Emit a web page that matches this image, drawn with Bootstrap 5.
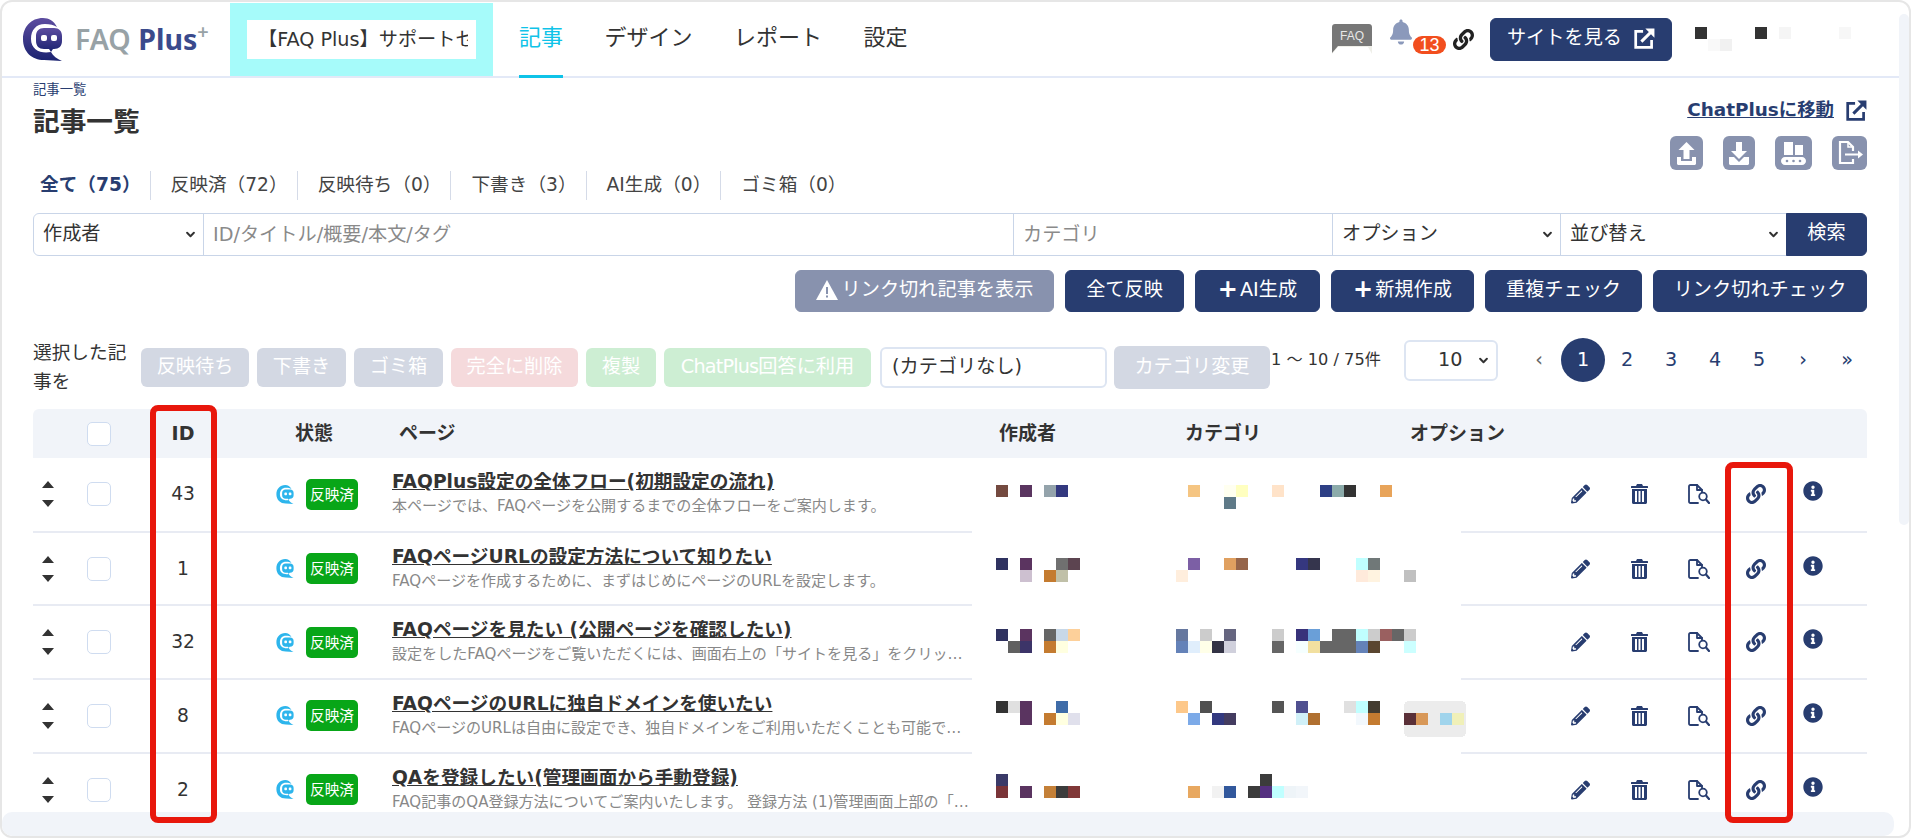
<!DOCTYPE html>
<html lang="ja">
<head>
<meta charset="UTF-8">
<title>記事一覧</title>
<link rel="stylesheet" href="https://cdn.jsdelivr.net/npm/bootstrap@5.3.3/dist/css/bootstrap.min.css">
<style>
  html, body { height: 100%; overflow: hidden; }
  body { font-family: "DejaVu Sans", "Noto Sans CJK JP", sans-serif; font-size: 19.2px; color: #333; background: #fff; }
  .fq-frame { position: relative; height: 100vh; border: 2px solid #e6e6e6; border-radius: 12px; overflow: hidden; }
  .fq-head { height: 76px; flex: none; border-bottom: 2px solid #e3e9f7; padding-right: 49px; }
  .fq-logo { width: 228px; flex: none; padding-left: 21px; gap: 13px; }
  .fq-logotext { font-family: "Noto Sans", sans-serif; font-size: 28.5px; font-weight: 600; color: #98a2a6; line-height: 1; white-space: nowrap; }
  .fq-logotext b { color: #3a4a8c; font-weight: 700; }
  .fq-logotext sup { font-size: 20px; top: -.55em; color: #98a2a6; }
  .fq-site { width: 263px; height: 73px; margin-top: 1px; flex: none; background: #a6fbfa; padding: 17px; }
  .fq-sitebox { height: 39px; background: #fff; padding: 0 8px 0 11px; }
  .fq-sitename { line-height: 39px; font-size: 19.2px; white-space: nowrap; overflow: hidden; }
  .fq-nav { margin-left: 26px; gap: 41.5px; height: 74px; }
  .fq-nav .nav-link { padding: 0; height: 76px; line-height: 72px; font-size: 22px; color: #333; }
  .fq-nav .nav-link.active { color: #0fc3e8; border-bottom: 3px solid #0fc3e8; }
  .fq-faq { width: 40px; height: 30px; }
  .fq-bellbox { position: relative; width: 56px; height: 40px; margin-left: 18px; }
  .fq-bellbox svg { width: 22px; height: 26px; color: #8b99bb; display: block; }
  .fq-count { position: absolute; left: 23px; top: 17px; width: 33px; height: 18px; border-radius: 9px; background: #f24e1e; color: #fff; font-size: 18px; line-height: 18px; text-align: center; font-family: "Liberation Sans", sans-serif; }
  .fq-chain { width: 21px; height: 21px; color: #222; margin-left: 7px; }
  .fq-viewsite { width: 182px; height: 43px; margin-left: 16px; gap: 12px; padding-bottom: 0; }
  .fq-user { width: 165px; height: 24px; margin-left: 23px; }
  .btn-fq { --bs-btn-bg: #283d70; --bs-btn-border-color: #283d70; --bs-btn-color: #fff; --bs-btn-hover-bg: #283d70; --bs-btn-hover-color: #fff; --bs-btn-hover-border-color: #283d70; --bs-btn-border-radius: 6px; font-size: 19.2px; padding: 0 0 2px; }
  .btn-fqmute { --bs-btn-bg: #8892ae; --bs-btn-border-color: #8892ae; --bs-btn-color: #fff; --bs-btn-hover-bg: #8892ae; --bs-btn-hover-color: #fff; --bs-btn-hover-border-color: #8892ae; --bs-btn-border-radius: 6px; font-size: 19.2px; padding: 0 0 2px; }
  .fq-plus { font-size: 24px; line-height: 1; margin-right: 2px; vertical-align: -1px; }
  .fq-main { flex: 1 1 auto; min-height: 0; overflow: hidden; padding: 0 42px 0 31px; }
  .fq-top { height: 92px; }
  .fq-crumb { font-size: 13.33px; line-height: 20px; padding-top: 2px; color: #283d70; }
  .fq-title { font-size: 26.67px; line-height: 36px; font-weight: 700; margin: 4px 0 0; color: #333; }
  .fq-jump { margin-top: 20px; font-size: 18.4px; line-height: 24px; font-weight: 700; color: #283d70; gap: 12px; }
  .fq-jump a { color: #283d70; }
  .fq-jump svg { width: 21px; height: 21px; }
  .fq-tools { margin-top: 14px; gap: 20px; }
  .fq-tool { height: 34px; border-radius: 6px; background: #8892ae; color: #fff; }
  .fq-tool svg { width: 100%; height: 100%; display: block; }
  .fq-tabs { margin-top: 1px; height: 29px; }
  .fq-tabs .nav-link { padding: 0 9px 2px 20px; line-height: 27px; color: #444; border-right: 1px solid #d5dbe8; font-size: 18.67px; }
  .fq-tabs li:first-child .nav-link { padding-left: 7px; font-weight: 700; color: #283d70; }
  .fq-tabs li:last-child .nav-link { border-right: 0; }
  .fq-search { margin-top: 13px; height: 43px; }
  .fq-search .form-control, .fq-search .form-select { border-color: #c9d5e8; border-radius: 0; height: 43px; font-size: 19.2px; color: #333; padding: 0 9px 1px; flex: none; }
  .fq-search .form-control::placeholder { color: #8a8a8a; }
  .fq-search > :first-child { border-top-left-radius: 6px !important; border-bottom-left-radius: 6px !important; }
  .fq-search .btn { border-radius: 0 6px 6px 0 !important; width: 81px; margin-left: -1px; }
  .form-select { background-image: url("data:image/svg+xml,%3csvg xmlns='http://www.w3.org/2000/svg' viewBox='0 0 16 16'%3e%3cpath fill='none' stroke='%23333' stroke-linecap='round' stroke-linejoin='round' stroke-width='3.5' d='m2 5 6 6 6-6'/%3e%3c/svg%3e"); background-size: 9px 9px; background-position: right 8px center; }
  .fq-actions { margin-top: 14px; gap: 11px; }
  .fq-actions .btn { height: 42px; }
  .fq-bulk { margin-top: 26px; height: 59px; }
  .fq-bulklabel { width: 108px; flex: none; line-height: 29px; font-size: 18.67px; padding-right: 8px; margin-top: -2px; }
  .fq-bulkbtns { gap: 8px; }
  .btn-fqoff { height: 39px; padding: 0; font-size: 19.2px; color: #fff; border: 0; border-radius: 6px; white-space: nowrap; }
  .fq-tight { letter-spacing: -.8px; }
  .fq-offgray { background: #d3d8e3; }
  .fq-offred { background: #f5dadc; }
  .fq-offgreen { background: #cdeed3; }
  .fq-catselect { width: 227px; height: 41px; margin-left: 9px; margin-right: 7px; flex: none; border: 2px solid #dde5f2; border-radius: 6px; padding: 0 10px; font-size: 19.2px; line-height: 35px; color: #333; background: #fff; }
  .fq-catchange { width: 156px; height: 43px; flex: none; padding: 0; font-size: 19.2px; color: #fff; background: #d3d8e3; border: 0; border-radius: 6px; }
  .fq-range { width: 133px; flex: none; margin-left: 1px; font-size: 16.2px; line-height: 44px; height: 44px; align-self: flex-start; white-space: nowrap; }
  .fq-perpage { width: 94px; height: 41px; flex: none; margin-top: 2px; align-self: flex-start; border: 2px solid #dde5f2; border-radius: 6px; font-size: 19.2px; padding: 0 0 0 32px; color: #333; }
  .fq-pages { margin: 0 0 0 19px; align-self: flex-start; }
  .fq-pages .page-link { width: 44px; height: 44px; padding: 0; line-height: 44px; text-align: center; border: 0; background: transparent; color: #283d70; font-size: 19.2px; margin: 0 !important; }
  .fq-pages .page-item { margin: 0; }
  .fq-pages .page-item.active .page-link { background: #283d70; color: #fff; border-radius: 50%; }
  .fq-pages .fq-arrow { color: #666; }
  .fq-table { width: 1834px; table-layout: fixed; margin: 12px 0 0; border-collapse: collapse; }
  .fq-table th { height: 49px; background: #f1f4f9; font-size: 19px; font-weight: 700; padding: 0; color: #333; }
  .fq-table th:last-child { border-top-right-radius: 6px; }
  .fq-table th:first-child { border-top-left-radius: 6px; }
  .fq-table td { height: 73.7px; padding: 0; border-bottom: 2px solid #e8ebf3; vertical-align: middle; }
  .fq-table td.fq-blur { border-bottom: 0; vertical-align: top; background: #fff; }
  .fq-pad9 { padding-left: 9px !important; }
  .fq-check { width: 24px; height: 24px; margin: 0; display: block; border: 1.5px solid #cfdcf0; border-radius: 5px !important; }
  .fq-thstate { padding-left: 59px !important; }
  .fq-thpage { padding-left: 7px !important; }
  .fq-thauthor { padding-left: 27px !important; }
  .fq-thcat { padding-left: 20px !important; }
  .fq-thopt { padding-left: 20px !important; }
  .fq-sort { width: 12px; height: 26px; display: block; color: #333; }
  .fq-num { text-align: center; font-size: 18.67px; color: #333; }
  .fq-state { padding-left: 40px; gap: 12px; }
  .fq-state svg { width: 18px; height: 19px; color: #2db5ec; }
  .fq-stateflag { width: 52px; height: 31px; line-height: 31px; text-align: center; padding: 0; background: #08a618; color: #fff; font-size: 14.67px; font-weight: 400; border-radius: 5px; }
  .fq-page { width: 580px; }
  .fq-pagetitle { display: block; font-size: 18.67px; font-weight: 700; line-height: 25px; color: #333; text-decoration: underline; white-space: nowrap; }
  .fq-pagesub { font-size: 15.05px; line-height: 25px; color: #888; }
  .fq-pix { display: block; overflow: visible; }
  .fq-pix rect { width: 12px; height: 12px; }
  .fq-pix rect.fq-tag { width: 62px; height: 36px; }
  .fq-ops { padding-left: 11px; color: #283d70; height: 20px; }
  .fq-ops svg { display: block; height: 20px; flex: none; }
  .fq-i1 { width: 19px; }
  .fq-i2 { width: 17px; margin-left: 41px; }
  .fq-i3 { width: 22px; margin-left: 40px; }
  .fq-i4 { width: 20px; margin-left: 36px; }
  .fq-i5 { width: 20px; margin-left: 37px; margin-top: -6px; }
  .fq-hbar { flex: none; height: 24px; margin-right: 15px; background: #f1f4f9; border-radius: 10px; }
  .fq-vbar { position: absolute; right: 0; top: 12px; width: 10px; height: 511px; background: #f1f4f9; border-radius: 5px; }
  .fq-redbox { position: absolute; border: 6px solid #e8170c; border-radius: 8px; pointer-events: none; }
  .fq-redid { left: 148px; top: 403px; width: 67px; height: 418px; }
  .fq-redlink { left: 1723px; top: 460px; width: 68px; height: 361px; }
</style>
</head>
<body>
<svg width="0" height="0" class="position-absolute">
  <symbol id="i-bot" viewBox="0 0 39 43">
    <path fill="currentColor" d="M20 0C8 0 0 9 0 21c0 13 9 21 21 21 6 0 12 1 18 1-5-2-9-5-11-9-10 2-20-2-20-13C8 12 13 6 22 6c5 0 9 1 12 3-3-6-8-9-14-9z"/>
    <path fill="currentColor" d="M21 10h10c5 0 8 3 8 8v5c0 5-3 8-8 8h-1l-2 3-2-3h-5c-5 0-8-3-8-8v-5c0-5 3-8 8-8z"/>
    <rect x="18" y="17" width="6" height="6" rx="2" fill="#fff"/><rect x="28" y="17" width="6" height="6" rx="2" fill="#fff"/>
  </symbol>
  <symbol id="i-link" viewBox="0 0 512 512"><path fill="currentColor" d="M326.612 185.391c59.747 59.809 58.927 155.698.36 214.59-.11.12-.24.25-.36.37l-67.2 67.2c-59.27 59.27-155.699 59.262-214.96 0-59.27-59.26-59.27-155.7 0-214.96l37.106-37.106c9.84-9.84 26.786-3.3 27.294 10.606.648 17.722 3.826 35.527 9.69 52.721 1.986 5.822.567 12.262-3.783 16.612l-13.087 13.087c-28.026 28.026-28.905 73.66-1.155 101.96 28.024 28.579 74.086 28.749 102.325.51l67.2-67.19c28.191-28.191 28.073-73.757 0-101.83-3.701-3.694-7.429-6.564-10.341-8.569a16.037 16.037 0 0 1-6.947-12.606c-.396-10.567 3.348-21.456 11.698-29.806l21.054-21.055c5.521-5.521 14.182-6.199 20.584-1.731a152.482 152.482 0 0 1 20.522 17.197zM467.547 44.449c-59.261-59.262-155.69-59.27-214.96 0l-67.2 67.2c-.12.12-.25.25-.36.37-58.566 58.892-59.387 154.781.36 214.59a152.454 152.454 0 0 0 20.521 17.196c6.402 4.468 15.064 3.789 20.584-1.731l21.054-21.055c8.35-8.35 12.094-19.239 11.698-29.806a16.037 16.037 0 0 0-6.947-12.606c-2.912-2.005-6.64-4.875-10.341-8.569-28.073-28.073-28.191-73.639 0-101.83l67.2-67.19c28.239-28.239 74.3-28.069 102.325.51 27.75 28.3 26.872 73.934-1.155 101.96l-13.087 13.087c-4.35 4.35-5.769 10.79-3.783 16.612 5.864 17.194 9.042 34.999 9.69 52.721.509 13.906 17.454 20.446 27.294 10.606l37.106-37.106c59.271-59.259 59.271-155.699.001-214.959z"/></symbol>
  <symbol id="i-pen" viewBox="0 0 512 512"><path fill="currentColor" d="M497.9 142.1l-46.1 46.1c-4.7 4.7-12.3 4.7-17 0l-111-111c-4.7-4.7-4.7-12.3 0-17l46.1-46.1c18.7-18.7 49.1-18.7 67.9 0l60.1 60.1c18.8 18.7 18.8 49.1 0 67.9zM284.2 99.8L21.6 362.4.4 483.9c-2.9 16.4 11.4 30.6 27.8 27.8l121.5-21.3 262.6-262.6c4.7-4.7 4.7-12.3 0-17l-111-111c-4.8-4.7-12.4-4.7-17.1 0zM124.1 339.9c-5.5-5.5-5.5-14.3 0-19.8l154-154c5.5-5.5 14.3-5.5 19.8 0s5.5 14.3 0 19.8l-154 154c-5.5 5.5-14.3 5.500-19.8 0zM88 424h48v36.3l-64.5 11.3-31.1-31.1L51.7 376H88v48z"/></symbol>
  <symbol id="i-trash" viewBox="0 0 17 20"><path fill="currentColor" fill-rule="evenodd" d="M6 0h5l1 2h4.5c.3 0 .5.2.5.5V4H0V2.500c0-.3.2-.5.500-.5H5zM1 5h15v13.500c0 .8-.7 1.500-1.500 1.500h-12C1.700 20 1 19.300 1 18.500zm3 2v11h2V7zm3.500 0v11h2V7zM11 7v11h2V7z"/></symbol>
  <symbol id="i-docfind" viewBox="0 0 22 20"><g fill="none" stroke="currentColor" stroke-width="1.800" stroke-linecap="round" stroke-linejoin="round"><path d="M10 19H2.500C1.500 19 1 18.500 1 17.500v-15C1 1.500 1.500 1 2.500 1H9l5 5v2"/><path d="M9 1v5h5"/><circle cx="15" cy="12.500" r="3.800"/><path d="M18 15.500l3 3.500" stroke-width="2.200"/></g></symbol>
  <symbol id="i-info" viewBox="0 0 512 512"><path fill="currentColor" d="M256 8C119.043 8 8 119.083 8 256c0 136.997 111.043 248 248 248s248-111.003 248-248C504 119.083 392.957 8 256 8zm0 110c23.196 0 42 18.804 42 42s-18.804 42-42 42-42-18.804-42-42 18.804-42 42-42zm56 254c0 6.627-5.373 12-12 12h-88c-6.627 0-12-5.373-12-12v-24c0-6.627 5.373-12 12-12h12v-64h-12c-6.627 0-12-5.373-12-12v-24c0-6.627 5.373-12 12-12h64c6.627 0 12 5.373 12 12v100h12c6.627 0 12 5.373 12 12v24z"/></symbol>
  <symbol id="i-bell" viewBox="0 0 448 512"><path fill="currentColor" d="M224 512c35.32 0 63.97-28.65 63.97-64H160.03c0 35.35 28.65 64 63.97 64zm215.39-149.71c-19.32-20.76-55.47-51.99-55.47-154.29 0-77.7-54.48-139.9-127.94-155.16V32c0-17.67-14.32-32-31.98-32s-31.98 14.33-31.98 32v20.84C118.56 68.1 64.08 130.3 64.08 208c0 102.3-36.15 133.53-55.47 154.29-6 6.45-8.66 14.16-8.61 21.71.11 16.4 12.98 32 32.1 32h383.8c19.12 0 32-15.6 32.1-32 .05-7.55-2.61-15.27-8.61-21.71z"/></symbol>
  <symbol id="i-out" viewBox="1 0.500 18.500 18.500"><path fill="none" stroke="currentColor" stroke-width="2.400" d="M9 3.500H2.500v14h14V11"/><path fill="none" stroke="currentColor" stroke-width="2.600" d="M7.500 12.500L17 3"/><path fill="currentColor" d="M11 1h8v8z"/></symbol>
  <symbol id="i-sort" viewBox="0 0 12 26"><path fill="currentColor" d="M6 0l6 7H0zM0 19h12l-6 7z"/></symbol>
</svg>
<div class="fq-frame d-flex flex-column">
  <header class="fq-head d-flex align-items-start">
    <div class="fq-logo d-flex align-items-center h-100">
      <svg width="39" height="43" viewBox="0 0 39 43">
        <defs><linearGradient id="logoGrad" x1="0" y1="0" x2="0" y2="1"><stop offset="0" stop-color="#5d4da0"/><stop offset="1" stop-color="#1a2270"/></linearGradient></defs>
        <path fill="url(#logoGrad)" d="M20 0C8 0 0 9 0 21c0 13 9 21 21 21 6 0 12 1 18 1-5-2-9-5-11-9-10 2-20-2-20-13C8 12 13 6 22 6c5 0 9 1 12 3-3-6-8-9-14-9z"/>
        <path fill="url(#logoGrad)" d="M21 10h10c5 0 8 3 8 8v5c0 5-3 8-8 8h-1l-2 3-2-3h-5c-5 0-8-3-8-8v-5c0-5 3-8 8-8z"/>
        <rect x="18" y="17" width="6" height="6" rx="2" fill="#fff"/><rect x="28" y="17" width="6" height="6" rx="2" fill="#fff"/>
      </svg>
      <span class="fq-logotext">FAQ <b>Plus</b><sup>+</sup></span>
    </div>
    <div class="fq-site"><div class="fq-sitebox"><div class="fq-sitename">【FAQ Plus】サポートセ</div></div></div>
    <ul class="nav fq-nav">
      <li class="nav-item"><a class="nav-link active" href="#">記事</a></li>
      <li class="nav-item"><a class="nav-link" href="#">デザイン</a></li>
      <li class="nav-item"><a class="nav-link" href="#">レポート</a></li>
      <li class="nav-item"><a class="nav-link" href="#">設定</a></li>
    </ul>
    <div class="ms-auto d-flex align-items-center h-100">
      <svg class="fq-faq" viewBox="0 0 40 30">
        <path fill="#efefe9" d="M0 22h40v8l-4-7H6l-6 7z"/>
        <path fill="#777" d="M3 0h34c1.700 0 3 1.300 3 3v19H6l-6 7V3c0-1.700 1.300-3 3-3z"/>
        <text x="20" y="16" text-anchor="middle" fill="#e8e8e8" font-size="12" font-family="Liberation Sans, sans-serif">FAQ</text>
      </svg>
      <div class="fq-bellbox">
        <svg><use href="#i-bell"/></svg>
        <span class="fq-count">13</span>
      </div>
      <svg class="fq-chain"><use href="#i-link"/></svg>
      <button class="btn btn-fq fq-viewsite d-flex align-items-center justify-content-center">サイトを見る <svg width="21" height="21"><use href="#i-out"/></svg></button>
      <svg class="fq-user" viewBox="0 0 165 24" shape-rendering="crispEdges">
        <rect x="0" width="12" height="12" fill="#333"/><rect x="60" width="12" height="12" fill="#333"/>
        <rect x="84" width="12" height="12" fill="#f5f5f5"/><rect x="144" width="12" height="12" fill="#f7f7f7"/>
        <rect x="13" y="12" width="12" height="12" fill="#f9f9f9"/><rect x="25" y="12" width="12" height="12" fill="#f1f1f1"/>
      </svg>
    </div>
  </header>

  <main class="fq-main">
    <div class="fq-top d-flex justify-content-between">
      <div>
        <div class="fq-crumb">記事一覧</div>
        <h1 class="fq-title">記事一覧</h1>
      </div>
      <div class="d-flex flex-column align-items-end">
        <div class="fq-jump d-flex align-items-center"><a href="#">ChatPlusに移動</a><svg><use href="#i-out"/></svg></div>
        <div class="fq-tools d-flex">
          <div class="fq-tool" style="width:33px"><svg viewBox="0 0 33 34"><path fill="currentColor" d="M16.500 6l8 8h-5v9h-6v-9h-5zM7 21h4v4h11v-4h4v6.500c0 .8-.7 1.500-1.500 1.500h-16C7.700 29 7 28.300 7 27.500z"/></svg></div>
          <div class="fq-tool" style="width:32px"><svg viewBox="0 0 32 34"><path fill="currentColor" d="M13 6h6v9h5l-8 8-8-8h5zM6 21h5l5 5 5-5h5v6.500c0 .8-.7 1.500-1.500 1.500h-17C6.700 29 6 28.300 6 27.500z"/></svg></div>
          <div class="fq-tool" style="width:37px"><svg viewBox="0 0 37 34"><path fill="currentColor" d="M9 6h9v13H9zM20 9h8v10h-8zM10 21h17c2.200 0 4 1.800 4 4s-1.800 4-4 4H10c-2.200 0-4-1.800-4-4s1.800-4 4-4z"/><g fill="#8892ae"><circle cx="12" cy="25" r="1.300"/><circle cx="18.500" cy="25" r="1.300"/><circle cx="25" cy="25" r="1.300"/></g></svg></div>
          <div class="fq-tool" style="width:35px"><svg viewBox="0 0 35 34"><path fill="none" stroke="currentColor" stroke-width="2.200" d="M21 15V11l-5-5H8v21h13v-4"/><path fill="none" stroke="currentColor" stroke-width="1.500" d="M16 6v5h5"/><path fill="currentColor" d="M13 17.500h13v-3l5 4-5 4v-3H13z"/></svg></div>
        </div>
      </div>
    </div>

    <ul class="nav fq-tabs">
      <li><a class="nav-link" href="#">全て（75）</a></li>
      <li><a class="nav-link" href="#">反映済（72）</a></li>
      <li><a class="nav-link" href="#">反映待ち（0）</a></li>
      <li><a class="nav-link" href="#">下書き（3）</a></li>
      <li><a class="nav-link" href="#">AI生成（0）</a></li>
      <li><a class="nav-link" href="#">ゴミ箱（0）</a></li>
    </ul>

    <form class="fq-search d-flex" onsubmit="return false">
      <select class="form-select" style="width:171px"><option>作成者</option></select>
      <input class="form-control" style="width:811px;margin-left:-1px" placeholder="ID/タイトル/概要/本文/タグ">
      <input class="form-control" style="width:320px;margin-left:-1px" placeholder="カテゴリ">
      <select class="form-select" style="width:229px;margin-left:-1px"><option>オプション</option></select>
      <select class="form-select" style="width:227px;margin-left:-1px"><option>並び替え</option></select>
      <button class="btn btn-fq">検索</button>
    </form>

    <div class="fq-actions d-flex justify-content-end">
      <button class="btn btn-fqmute d-flex align-items-center justify-content-center gap-1" style="width:259px"><svg width="22" height="20" viewBox="0 0 22 20"><path fill="#fff" d="M11 0l11 20H0z"/><path fill="#8892ae" d="M10 7h2v7h-2zM10 15.500h2v2h-2z"/></svg>リンク切れ記事を表示</button>
      <button class="btn btn-fq" style="width:119px">全て反映</button>
      <button class="btn btn-fq" style="width:125px"><b class="fq-plus">+</b>AI生成</button>
      <button class="btn btn-fq" style="width:143px"><b class="fq-plus">+</b>新規作成</button>
      <button class="btn btn-fq" style="width:157px">重複チェック</button>
      <button class="btn btn-fq" style="width:214px">リンク切れチェック</button>
    </div>

    <div class="fq-bulk d-flex align-items-center">
      <div class="fq-bulklabel">選択した記事を</div>
      <div class="fq-bulkbtns d-flex">
        <button class="btn-fqoff fq-offgray" style="width:108px">反映待ち</button>
        <button class="btn-fqoff fq-offgray" style="width:89px">下書き</button>
        <button class="btn-fqoff fq-offgray" style="width:89px">ゴミ箱</button>
        <button class="btn-fqoff fq-offred" style="width:127px">完全に削除</button>
        <button class="btn-fqoff fq-offgreen" style="width:70px">複製</button>
        <button class="btn-fqoff fq-offgreen" style="width:207px"><span class="fq-tight">ChatPlus</span>回答に利用</button>
      </div>
      <div class="fq-catselect">(カテゴリなし)</div>
      <button class="fq-catchange">カテゴリ変更</button>
      <div class="fq-range">1 ～ 10 / 75件</div>
      <select class="form-select fq-perpage"><option>10</option></select>
      <ul class="pagination fq-pages">
        <li class="page-item"><a class="page-link fq-arrow" href="#">‹</a></li>
        <li class="page-item active"><a class="page-link" href="#">1</a></li>
        <li class="page-item"><a class="page-link" href="#">2</a></li>
        <li class="page-item"><a class="page-link" href="#">3</a></li>
        <li class="page-item"><a class="page-link" href="#">4</a></li>
        <li class="page-item"><a class="page-link" href="#">5</a></li>
        <li class="page-item"><a class="page-link" href="#">›</a></li>
        <li class="page-item"><a class="page-link" href="#">»</a></li>
      </ul>
    </div>

    <table class="fq-table">
      <colgroup>
        <col style="width:45px"><col style="width:52px"><col style="width:106px"><col style="width:156px"><col style="width:580px"><col style="width:193px"><col style="width:225px"><col style="width:71px"><col style="width:99px"><col style="width:307px">
      </colgroup>
      <thead>
        <tr>
          <th></th>
          <th class="fq-pad9"><input type="checkbox" class="form-check-input fq-check"></th>
          <th class="text-center">ID</th>
          <th class="fq-thstate">状態</th>
          <th class="fq-thpage">ページ</th>
          <th class="fq-thauthor">作成者</th>
          <th class="fq-thcat">カテゴリ</th>
          <th class="fq-thopt" colspan="2">オプション</th>
          <th></th>
        </tr>
      </thead>
      <tbody>
        <tr>
          <td class="fq-pad9"><svg class="fq-sort"><use href="#i-sort"/></svg></td>
          <td class="fq-pad9"><input type="checkbox" class="form-check-input fq-check"></td>
          <td class="fq-num">43</td>
          <td><div class="fq-state d-flex align-items-center"><svg><use href="#i-bot"/></svg><span class="badge fq-stateflag">反映済</span></div></td>
          <td class="fq-page"><a class="fq-pagetitle" href="#">FAQPlus設定の全体フロー(初期設定の流れ)</a><div class="fq-pagesub text-truncate">本ページでは、FAQページを公開するまでの全体フローをご案内します。</div></td>
          <td class="fq-blur"><svg class="fq-pix" width="193" height="73" shape-rendering="crispEdges"><rect x="24" y="27" fill="#744a40"/><rect x="48" y="27" fill="#5a3560"/><rect x="72" y="27" fill="#94a3ab"/><rect x="84" y="27" fill="#33397f"/></svg></td>
          <td class="fq-blur" colspan="2"><svg class="fq-pix" width="296" height="73" shape-rendering="crispEdges"><rect x="23" y="27" fill="#f5c582"/><rect x="59" y="27" fill="#fffff0"/><rect x="71" y="27" fill="#ffffc0"/><rect x="107" y="27" fill="#ffe3c9"/><rect x="155" y="27" fill="#2e3f85"/><rect x="167" y="27" fill="#8cabaa"/><rect x="179" y="27" fill="#333"/><rect x="215" y="27" fill="#e8a45a"/><rect x="59" y="39" fill="#5f7a88"/></svg></td>
          <td></td>
          <td><div class="fq-ops d-flex align-items-center"><svg class="fq-i1"><use href="#i-pen"/></svg><svg class="fq-i2"><use href="#i-trash"/></svg><svg class="fq-i3"><use href="#i-docfind"/></svg><svg class="fq-i4"><use href="#i-link"/></svg><svg class="fq-i5"><use href="#i-info"/></svg></div></td>
        </tr>
        <tr>
          <td class="fq-pad9"><svg class="fq-sort"><use href="#i-sort"/></svg></td>
          <td class="fq-pad9"><input type="checkbox" class="form-check-input fq-check"></td>
          <td class="fq-num">1</td>
          <td><div class="fq-state d-flex align-items-center"><svg><use href="#i-bot"/></svg><span class="badge fq-stateflag">反映済</span></div></td>
          <td class="fq-page"><a class="fq-pagetitle" href="#">FAQページURLの設定方法について知りたい</a><div class="fq-pagesub text-truncate">FAQページを作成するために、まずはじめにページのURLを設定します。</div></td>
          <td class="fq-blur"><svg class="fq-pix" width="193" height="73" shape-rendering="crispEdges"><rect x="24" y="26" fill="#2f3260"/><rect x="48" y="26" fill="#5b3460"/><rect x="84" y="26" fill="#707070"/><rect x="96" y="26" fill="#5c4450"/><rect x="48" y="38" fill="#cdc0d0"/><rect x="72" y="38" fill="#c47b30"/><rect x="84" y="38" fill="#c0c0a8"/></svg></td>
          <td class="fq-blur" colspan="2"><svg class="fq-pix" width="296" height="73" shape-rendering="crispEdges"><rect x="23" y="26" fill="#7c5fa5"/><rect x="59" y="26" fill="#e0a060"/><rect x="71" y="26" fill="#96654a"/><rect x="131" y="26" fill="#35377f"/><rect x="143" y="26" fill="#35354d"/><rect x="191" y="26" fill="#c0ffff"/><rect x="203" y="26" fill="#707878"/><rect x="11" y="38" fill="#ffeedd"/><rect x="191" y="38" fill="#ffeadb"/><rect x="203" y="38" fill="#fff3e0"/><rect x="239" y="38" fill="#c0c0c0"/></svg></td>
          <td></td>
          <td><div class="fq-ops d-flex align-items-center"><svg class="fq-i1"><use href="#i-pen"/></svg><svg class="fq-i2"><use href="#i-trash"/></svg><svg class="fq-i3"><use href="#i-docfind"/></svg><svg class="fq-i4"><use href="#i-link"/></svg><svg class="fq-i5"><use href="#i-info"/></svg></div></td>
        </tr>
        <tr>
          <td class="fq-pad9"><svg class="fq-sort"><use href="#i-sort"/></svg></td>
          <td class="fq-pad9"><input type="checkbox" class="form-check-input fq-check"></td>
          <td class="fq-num">32</td>
          <td><div class="fq-state d-flex align-items-center"><svg><use href="#i-bot"/></svg><span class="badge fq-stateflag">反映済</span></div></td>
          <td class="fq-page"><a class="fq-pagetitle" href="#">FAQページを見たい (公開ページを確認したい)</a><div class="fq-pagesub text-truncate">設定をしたFAQページをご覧いただくには、画面右上の「サイトを見る」をクリックしてください。</div></td>
          <td class="fq-blur"><svg class="fq-pix" width="193" height="73" shape-rendering="crispEdges"><rect x="24" y="24" fill="#2f3260"/><rect x="48" y="24" fill="#5b3460"/><rect x="72" y="24" fill="#666"/><rect x="84" y="24" fill="#c8d8e8"/><rect x="96" y="24" fill="#fdd09a"/><rect x="36" y="36" fill="#606060"/><rect x="48" y="36" fill="#3c3468"/><rect x="72" y="36" fill="#c47b30"/><rect x="84" y="36" fill="#ffffe0"/></svg></td>
          <td class="fq-blur" colspan="2"><svg class="fq-pix" width="296" height="73" shape-rendering="crispEdges"><rect x="11" y="24" fill="#66789f"/><rect x="35" y="24" fill="#ccc"/><rect x="59" y="24" fill="#666680"/><rect x="107" y="24" fill="#ccc"/><rect x="131" y="24" fill="#38327a"/><rect x="143" y="24" fill="#6a9fd8"/><rect x="167" y="24" fill="#666"/><rect x="179" y="24" fill="#666"/><rect x="191" y="24" fill="#c0ffff"/><rect x="203" y="24" fill="#ccc"/><rect x="215" y="24" fill="#9a6060"/><rect x="227" y="24" fill="#666"/><rect x="239" y="24" fill="#ccc"/><rect x="11" y="36" fill="#6482b8"/><rect x="23" y="36" fill="#e0eefc"/><rect x="35" y="36" fill="#ffffe8"/><rect x="47" y="36" fill="#333345"/><rect x="59" y="36" fill="#d0d0dc"/><rect x="107" y="36" fill="#666"/><rect x="131" y="36" fill="#f5ffff"/><rect x="143" y="36" fill="#f2e0a0"/><rect x="155" y="36" fill="#666"/><rect x="167" y="36" fill="#666"/><rect x="179" y="36" fill="#666"/><rect x="191" y="36" fill="#6482b8"/><rect x="203" y="36" fill="#5a4630"/><rect x="239" y="36" fill="#ccffff"/></svg></td>
          <td></td>
          <td><div class="fq-ops d-flex align-items-center"><svg class="fq-i1"><use href="#i-pen"/></svg><svg class="fq-i2"><use href="#i-trash"/></svg><svg class="fq-i3"><use href="#i-docfind"/></svg><svg class="fq-i4"><use href="#i-link"/></svg><svg class="fq-i5"><use href="#i-info"/></svg></div></td>
        </tr>
        <tr>
          <td class="fq-pad9"><svg class="fq-sort"><use href="#i-sort"/></svg></td>
          <td class="fq-pad9"><input type="checkbox" class="form-check-input fq-check"></td>
          <td class="fq-num">8</td>
          <td><div class="fq-state d-flex align-items-center"><svg><use href="#i-bot"/></svg><span class="badge fq-stateflag">反映済</span></div></td>
          <td class="fq-page"><a class="fq-pagetitle" href="#">FAQページのURLに独自ドメインを使いたい</a><div class="fq-pagesub text-truncate">FAQページのURLは自由に設定でき、独自ドメインをご利用いただくことも可能です。詳しくはこちらをご覧ください。</div></td>
          <td class="fq-blur"><svg class="fq-pix" width="193" height="73" shape-rendering="crispEdges"><rect x="24" y="22" fill="#333"/><rect x="36" y="22" fill="#e0e0e0"/><rect x="48" y="22" fill="#5a3460"/><rect x="84" y="22" fill="#3f6ca8"/><rect x="48" y="34" fill="#5a3460"/><rect x="72" y="34" fill="#c47b30"/><rect x="84" y="34" fill="#ffffe0"/><rect x="96" y="34" fill="#e0e0ec"/></svg></td>
          <td class="fq-blur" colspan="2"><svg class="fq-pix" width="296" height="73" shape-rendering="crispEdges"><rect x="11" y="22" fill="#fdc88a"/><rect x="35" y="22" fill="#505050"/><rect x="107" y="22" fill="#555"/><rect x="131" y="22" fill="#505090"/><rect x="179" y="22" fill="#e0e0e0"/><rect x="191" y="22" fill="#c0ffff"/><rect x="203" y="22" fill="#443c30"/><rect x="23" y="34" fill="#7caae8"/><rect x="47" y="34" fill="#33397f"/><rect x="59" y="34" fill="#443c60"/><rect x="131" y="34" fill="#d0f0f8"/><rect x="143" y="34" fill="#b07030"/><rect x="191" y="34" fill="#f2f8fd"/><rect x="203" y="34" fill="#c47b30"/><rect class="fq-tag" x="239" y="22" rx="5" fill="#ececec"/><rect x="239" y="34" fill="#5a3038"/><rect x="251" y="34" fill="#d89858"/><rect x="275" y="34" fill="#a0d4ec"/><rect x="287" y="34" fill="#f0f0b8"/></svg></td>
          <td></td>
          <td><div class="fq-ops d-flex align-items-center"><svg class="fq-i1"><use href="#i-pen"/></svg><svg class="fq-i2"><use href="#i-trash"/></svg><svg class="fq-i3"><use href="#i-docfind"/></svg><svg class="fq-i4"><use href="#i-link"/></svg><svg class="fq-i5"><use href="#i-info"/></svg></div></td>
        </tr>
        <tr>
          <td class="fq-pad9"><svg class="fq-sort"><use href="#i-sort"/></svg></td>
          <td class="fq-pad9"><input type="checkbox" class="form-check-input fq-check"></td>
          <td class="fq-num">2</td>
          <td><div class="fq-state d-flex align-items-center"><svg><use href="#i-bot"/></svg><span class="badge fq-stateflag">反映済</span></div></td>
          <td class="fq-page"><a class="fq-pagetitle" href="#">QAを登録したい(管理画面から手動登録)</a><div class="fq-pagesub text-truncate">FAQ記事のQA登録方法についてご案内いたします。 登録方法 (1)管理画面上部の「記事」をクリックします。</div></td>
          <td class="fq-blur"><svg class="fq-pix" width="193" height="73" shape-rendering="crispEdges"><rect x="24" y="21" fill="#3a3a68"/><rect x="24" y="33" fill="#7a3438"/><rect x="48" y="33" fill="#5a3460"/><rect x="72" y="33" fill="#c48038"/><rect x="84" y="33" fill="#3c3c3c"/><rect x="96" y="33" fill="#803838"/></svg></td>
          <td class="fq-blur" colspan="2"><svg class="fq-pix" width="296" height="73" shape-rendering="crispEdges"><rect x="95" y="21" fill="#3c3c3c"/><rect x="23" y="33" fill="#e8a860"/><rect x="47" y="33" fill="#f2f2f2"/><rect x="59" y="33" fill="#32589c"/><rect x="83" y="33" fill="#3c3c3c"/><rect x="95" y="33" fill="#553080"/><rect x="107" y="33" fill="#c0ffff"/><rect x="119" y="33" fill="#eef4f8"/><rect x="131" y="33" fill="#f2f6fa"/></svg></td>
          <td></td>
          <td><div class="fq-ops d-flex align-items-center"><svg class="fq-i1"><use href="#i-pen"/></svg><svg class="fq-i2"><use href="#i-trash"/></svg><svg class="fq-i3"><use href="#i-docfind"/></svg><svg class="fq-i4"><use href="#i-link"/></svg><svg class="fq-i5"><use href="#i-info"/></svg></div></td>
        </tr>
      </tbody>
    </table>
  </main>

  <div class="fq-hbar"></div>
  <div class="fq-vbar"></div>
  <div class="fq-redbox fq-redid"></div>
  <div class="fq-redbox fq-redlink"></div>
</div>
<script src="https://cdn.jsdelivr.net/npm/bootstrap@5.3.3/dist/js/bootstrap.bundle.min.js"></script>
</body>
</html>
